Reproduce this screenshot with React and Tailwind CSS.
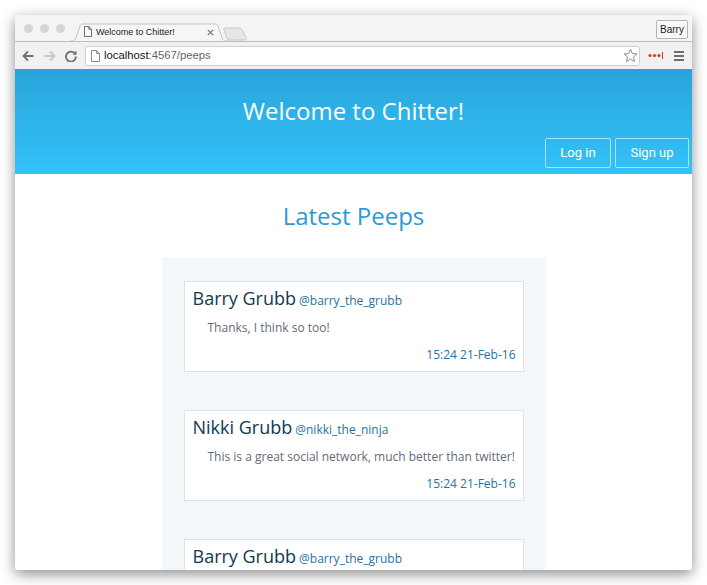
import React from 'react';

const peeps = [
    { name: "Barry Grubb", handle: "@barry_the_grubb", text: "Thanks, I think so too!", time: "15:24 21-Feb-16" },
    { name: "Nikki Grubb", handle: "@nikki_the_ninja", text: "This is a great social network, much better than twitter!", time: "15:24 21-Feb-16" },
    { name: "Barry Grubb", handle: "@barry_the_grubb", text: "Thanks, I think so too!", time: "15:24 21-Feb-16" },
];

function PeepCard({ peep }) {
    return (
        <div className="h-[91px] shrink-0 bg-white border border-[#dfe2e5] pl-[8px] pr-[7px] pt-[2px]">
            <div className="flex items-baseline gap-[3px] h-[28px] leading-[28px]">
                <span className="text-[18px] text-[#0f3a52]">{peep.name}</span>
                <span className="text-[12px] text-[#2a6f9c]">{peep.handle}</span>
            </div>
            <p className="mt-[7px] pl-[15px] text-[12px] leading-[18px] text-[#5f6b7a] whitespace-nowrap">{peep.text}</p>
            <p className="mt-[9px] text-right text-[12px] leading-[18px] text-[#2473a8]">{peep.time}</p>
        </div>
    );
}

function TabBar() {
    return (
        <div className="relative h-[27px] shrink-0 bg-[#f4f4f4] border-b border-[#bdbdbd] flex items-end">
            <div className="flex gap-[7px] pl-[9px] pb-[8px]">
                <span className="w-[9px] h-[9px] rounded-full bg-[#d6d6d6]" />
                <span className="w-[9px] h-[9px] rounded-full bg-[#d6d6d6]" />
                <span className="w-[9px] h-[9px] rounded-full bg-[#d6d6d6]" />
            </div>
            <svg className="absolute left-[55px] top-[8px]" width="175" height="19" viewBox="0 0 175 19" fill="none">
                <path d="M0 18h2c2 0 3-1 4-3l4-12c.5-1.500 1.500-2 3-2h132c1.500 0 2.500.5 3 2l4 12c1 2 2 3 4 3h3" fill="#f6f6f6" stroke="#c4c4c4" />
            </svg>
            <svg className="absolute left-[208px] top-[12px]" width="26" height="14" viewBox="0 0 26 14" fill="none">
                <path d="M1 1h16c1 0 1.500.5 2 1.500l4 8c.5 1 0 2.500-1.500 2.500H6c-1 0-1.500-.5-2-1.500L1 3c-.5-1 0-2 0-2z" fill="#e6e6e6" stroke="#c8c8c8" />
            </svg>
            <svg className="absolute left-[69px] top-[11px]" width="8" height="11" viewBox="0 0 9 12" fill="#fff" stroke="#555">
                <path d="M.5.500h5l3 3v8h-8z" />
                <path d="M5.500.500v3h3" fill="none" />
            </svg>
            <span className="absolute left-[81px] top-[10px] text-[9px] leading-[14px] text-[#222] font-['Liberation_Sans',sans-serif]">Welcome to Chitter!</span>
            <svg className="absolute left-[192px] top-[14px]" width="7" height="7" viewBox="0 0 7 7" stroke="#777" strokeWidth="1.200">
                <path d="M.8.800l5.400 5.400M6.200.800L.8 6.200" />
            </svg>
            <span className="absolute right-[4px] top-[5px] w-[32px] h-[19px] bg-[#f8f8f8] border border-[#b5b5b5] rounded-[2px] flex items-center justify-center text-[10px] text-[#222] font-['Liberation_Sans',sans-serif]">Barry</span>
        </div>
    );
}

function Toolbar() {
    return (
        <div className="h-[27px] shrink-0 bg-[#f1f1f1] flex items-center pl-[7px] pr-[8px]">
            <svg width="12" height="12" viewBox="0 0 12 12" fill="none" stroke="#6e6e6e" strokeWidth="1.800">
                <path d="M11.500 6H1.500M6 1.500L1.500 6 6 10.500" />
            </svg>
            <svg className="ml-[10px]" width="12" height="12" viewBox="0 0 12 12" fill="none" stroke="#c8c8c8" strokeWidth="1.800">
                <path d="M.5 6h10M6 1.500L10.500 6 6 10.500" />
            </svg>
            <svg className="ml-[9px]" width="12" height="12" viewBox="0 0 12 12" fill="none" stroke="#6e6e6e" strokeWidth="1.800">
                <path d="M10.300 4A5 5 0 1 0 11 6.500" />
                <path d="M11.500 .8v4h-4z" fill="#6e6e6e" stroke="none" />
            </svg>
            <div className="ml-[8px] w-[556px] h-[20px] bg-white border border-[#d0d0d0] rounded-[2px] flex items-center pl-[5px] pr-[1px]">
                <svg width="9" height="12" viewBox="0 0 9 12" fill="#fff" stroke="#8a8a8a">
                    <path d="M.5.500h5l3 3v8h-8z" />
                    <path d="M5.500.500v3h3" fill="none" />
                </svg>
                <span className="ml-[4px] text-[11.300px] text-[#666] font-['Liberation_Sans',sans-serif]"><span className="text-[#111]">localhost</span>:4567/peeps</span>
                <svg className="ml-auto" width="15" height="15" viewBox="0 0 24 24" fill="#fff" stroke="#8a8a8a" strokeWidth="1.600">
                    <path d="M12 2l3 6.800 7.300.7-5.500 4.900 1.600 7.200L12 17.900l-6.400 3.700 1.600-7.200L1.700 9.500 9 8.800z" />
                </svg>
            </div>
            <svg className="ml-[8px]" width="15" height="7" viewBox="0 0 15 7" fill="#e0352b">
                <circle cx="2" cy="3.500" r="1.600" />
                <circle cx="6.500" cy="3.500" r="1.600" />
                <circle cx="11" cy="3.500" r="1.600" />
                <rect x="14" y="0" width="1" height="7" />
            </svg>
            <div className="ml-[11px] flex flex-col gap-[2px]">
                <span className="w-[10px] h-[2px] bg-[#6e6e6e]" />
                <span className="w-[10px] h-[2px] bg-[#6e6e6e]" />
                <span className="w-[10px] h-[2px] bg-[#6e6e6e]" />
            </div>
        </div>
    );
}

export default function App() {
    return (
        <div className="w-[707px] h-[585px] bg-white pl-[15px] pt-[15px] overflow-hidden">
            <div className="w-[677px] h-[555px] flex flex-col overflow-hidden rounded-[3px] bg-white shadow-[0_4px_14px_rgba(0,0,0,0.45)] font-['Open_Sans',sans-serif]">
                <TabBar />
                <Toolbar />

                <header className="h-[105px] shrink-0 bg-gradient-to-b from-[#29a4da] to-[#33c3fa] flex flex-col">
                    <h1 className="pt-[24px] h-[69px] text-center text-[24px] leading-[36px] text-white">Welcome to Chitter!</h1>
                    <div className="flex justify-end gap-[4px] pr-[3px]">
                        <button className="w-[66px] h-[30px] border border-[#a9e3fb] rounded-[2px] text-[13px] text-white font-['Roboto',sans-serif]">Log in</button>
                        <button className="w-[74px] h-[30px] border border-[#a9e3fb] rounded-[2px] text-[13px] text-white font-['Roboto',sans-serif]">Sign up</button>
                    </div>
                </header>

                <main className="flex-1 min-h-0 flex flex-col items-center">
                    <h2 className="pt-[25px] h-[84px] text-[24px] leading-[34px] text-[#2b9ad6]">Latest Peeps</h2>
                    <div className="w-[384px] flex-1 min-h-0 bg-[#f4f7fa] pt-[23px] pl-[22px] pr-[22px] flex flex-col gap-[38px] overflow-hidden">
                        {peeps.map((peep, idx) => (
                            <PeepCard key={idx} peep={peep} />
                        ))}
                    </div>
                </main>
            </div>
        </div>
    );
}
